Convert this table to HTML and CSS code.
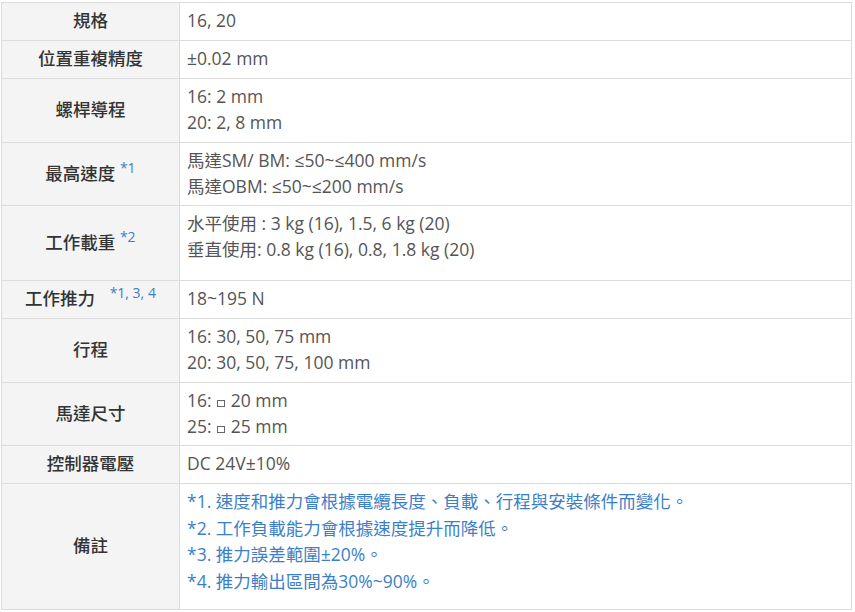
FILE: index.html
```html
<!DOCTYPE html>
<html lang="zh-Hant">
<head>
<meta charset="utf-8">
<link rel="stylesheet" href="styles.css">
</head>
<body>
<table class="spec">
  <colgroup><col class="c1"><col class="c2"></colgroup>
  <tr class="r1"><th>規格</th><td>16, 20</td></tr>
  <tr class="r1"><th>位置重複精度</th><td>±0.02 mm</td></tr>
  <tr class="r2"><th>螺桿導程</th><td>16: 2 mm<br>20: 2, 8 mm</td></tr>
  <tr class="r2b"><th>最高速度 <sup>*1</sup></th><td>馬達SM/ BM: ≤50~≤400 mm/s<br>馬達OBM: ≤50~≤200 mm/s</td></tr>
  <tr class="r3"><th>工作載重 <sup>*2</sup></th><td>水平使用 : 3 kg (16), 1.5, 6 kg (20)<br>垂直使用: 0.8 kg (16), 0.8, 1.8 kg (20)</td></tr>
  <tr class="r1"><th>工作推力 <sup class="wide">*1, 3, 4</sup></th><td>18~195 N</td></tr>
  <tr class="r2"><th>行程</th><td>16: 30, 50, 75 mm<br>20: 30, 50, 75, 100 mm</td></tr>
  <tr class="r2b"><th>馬達尺寸</th><td>16: <span class="sq"></span> 20 mm<br>25: <span class="sq"></span> 25 mm</td></tr>
  <tr class="r1"><th>控制器電壓</th><td>DC 24V±10%</td></tr>
  <tr class="r4"><th>備註</th><td class="notes">*1. 速度和推力會根據電纜長度、負載、行程與安裝條件而變化。<br>*2. 工作負載能力會根據速度提升而降低。<br>*3. 推力誤差範圍±20%。<br>*4. 推力輸出區間為30%~90%。</td></tr>
</table>
</body>
</html>
```
FILE: styles.css
```css
body {
  margin: 0;
  background: #fff;
  font-family: "Open Sans", "Noto Sans CJK TC", sans-serif;
}
.spec {
  border-collapse: collapse;
  width: 851px;
  margin: 2px 0 0 1px;
  font-size: 17.5px;
  line-height: 26px;
}
.c1 { width: 178px; }
.spec th, .spec td {
  border: 1px solid #dcdcdc;
  padding: 4px 7px 7px;
}
.spec th {
  background: #f4f4f4;
  color: #333;
  font-weight: 500;
  text-align: center;
  vertical-align: middle;
  white-space: nowrap;
}
.spec td {
  color: #555;
  vertical-align: top;
  text-align: left;
}
.r1 { height: 38px; }
.r2 { height: 64px; }
.r2b th, .r2b td { padding-bottom: 6px; }
.r3 { height: 75px; }
.r4 { height: 126px; }
.spec sup {
  color: #3d7fc6;
  font-weight: 400;
  font-size: 14px;
  line-height: 0;
  vertical-align: 7px;
}
.spec sup.wide { margin-left: 10px; }
.sq {
  display: inline-block;
  width: 6px;
  height: 5px;
  border: 1px solid #666;
  vertical-align: baseline;
  margin: 0 1px;
}
.spec td.notes { color: #3d7fc6; line-height: 26.7px; }
```
